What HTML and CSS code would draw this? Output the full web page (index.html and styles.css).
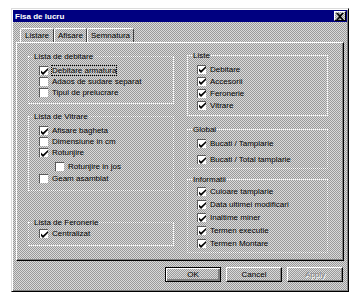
FILE: index.html
```html
<!DOCTYPE html>
<html lang="ro">
<head>
  <meta charset="UTF-8">
  <meta name="viewport" content="width=device-width, initial-scale=1.0">
  <title>Fisa de lucru</title>
  <link rel="stylesheet" href="styles.css">
</head>
<body>
  <div class="window">
    <div class="titlebar">
      <span class="title">Fisa de lucru</span>
      <span class="close-btn">
        <svg width="8" height="7" viewBox="0 0 8 7"><path d="M0 0h2l2 2 2-2h2L5 3.5 8 7H6L4 5 2 7H0l3-3.5z" fill="#000"/></svg>
      </span>
    </div>

    <div class="tabs">
      <span class="tab active">Listare</span>
      <span class="tab">Afisare</span>
      <span class="tab">Semnatura</span>
    </div>

    <div class="panel">
      <div class="column left">
        <fieldset class="group g-debitare">
          <legend>Lista de debitare</legend>
          <div class="row"><span class="check on"><svg viewBox="0 0 7 7"><path d="M0 2.5l2 2 5-4.5v2l-5 5-2-2z"/></svg></span><span class="focus">Debitare armatura</span></div>
          <div class="row"><span class="check"></span>Adaos de sudare separat</div>
          <div class="row"><span class="check"></span>Tipul de prelucrare</div>
        </fieldset>

        <fieldset class="group g-vitrare">
          <legend>Lista de Vitrare</legend>
          <div class="row"><span class="check on"><svg viewBox="0 0 7 7"><path d="M0 2.5l2 2 5-4.5v2l-5 5-2-2z"/></svg></span>Afisare bagheta</div>
          <div class="row"><span class="check"></span>Dimensiune in cm</div>
          <div class="row"><span class="check on"><svg viewBox="0 0 7 7"><path d="M0 2.5l2 2 5-4.5v2l-5 5-2-2z"/></svg></span>Rotunjire</div>
          <div class="row indent"><span class="check"></span>Rotunjire in jos</div>
          <div class="row after-indent"><span class="check"></span>Geam asamblat</div>
        </fieldset>

        <fieldset class="group g-feronerie">
          <legend>Lista de Feronerie</legend>
          <div class="row"><span class="check on"><svg viewBox="0 0 7 7"><path d="M0 2.5l2 2 5-4.5v2l-5 5-2-2z"/></svg></span>Centralizat</div>
        </fieldset>
      </div>

      <div class="column right">
        <fieldset class="group g-liste">
          <legend>Liste</legend>
          <div class="row"><span class="check on"><svg viewBox="0 0 7 7"><path d="M0 2.5l2 2 5-4.5v2l-5 5-2-2z"/></svg></span>Debitare</div>
          <div class="row"><span class="check on"><svg viewBox="0 0 7 7"><path d="M0 2.5l2 2 5-4.5v2l-5 5-2-2z"/></svg></span>Accesorii</div>
          <div class="row"><span class="check on"><svg viewBox="0 0 7 7"><path d="M0 2.5l2 2 5-4.5v2l-5 5-2-2z"/></svg></span>Feronerie</div>
          <div class="row"><span class="check on"><svg viewBox="0 0 7 7"><path d="M0 2.5l2 2 5-4.5v2l-5 5-2-2z"/></svg></span>Vitrare</div>
        </fieldset>

        <fieldset class="group g-global">
          <legend>Global</legend>
          <div class="row"><span class="check on"><svg viewBox="0 0 7 7"><path d="M0 2.5l2 2 5-4.5v2l-5 5-2-2z"/></svg></span>Bucati / Tamplarie</div>
          <div class="row"><span class="check on"><svg viewBox="0 0 7 7"><path d="M0 2.5l2 2 5-4.5v2l-5 5-2-2z"/></svg></span>Bucati / Total tamplarie</div>
        </fieldset>

        <fieldset class="group g-informatii">
          <legend>Informatii</legend>
          <div class="row"><span class="check on"><svg viewBox="0 0 7 7"><path d="M0 2.5l2 2 5-4.5v2l-5 5-2-2z"/></svg></span>Culoare tamplarie</div>
          <div class="row"><span class="check on"><svg viewBox="0 0 7 7"><path d="M0 2.5l2 2 5-4.5v2l-5 5-2-2z"/></svg></span>Data ultimei modificari</div>
          <div class="row"><span class="check on"><svg viewBox="0 0 7 7"><path d="M0 2.5l2 2 5-4.5v2l-5 5-2-2z"/></svg></span>Inaltime miner</div>
          <div class="row"><span class="check on"><svg viewBox="0 0 7 7"><path d="M0 2.5l2 2 5-4.5v2l-5 5-2-2z"/></svg></span>Termen executie</div>
          <div class="row"><span class="check on"><svg viewBox="0 0 7 7"><path d="M0 2.5l2 2 5-4.5v2l-5 5-2-2z"/></svg></span>Termen Montare</div>
        </fieldset>
      </div>
    </div>

    <div class="buttons">
      <button class="btn default">OK</button>
      <button class="btn">Cancel</button>
      <button class="btn disabled">Apply</button>
    </div>
  </div>
</body>
</html>
```

FILE: styles.css
```css
:root {
  --face: #c0c0c0;
  --light: #ffffff;
  --shadow: #808080;
  --dark: #000000;
  --navy: #000080;
}

* {
  box-sizing: border-box;
}

body {
  margin: 0;
  background-color: #fff;
  font-family: 'Liberation Sans', Arial, sans-serif;
  font-size: 8px;
  color: #000;
}

/* dithered dialog face */
.window,
.btn,
.close-btn {
  background-color: var(--face);
  background-image: repeating-conic-gradient(#9a9a9a 0 25%, #dadada 0 50%);
  background-size: 2px 2px;
}

.window {
  margin: 8px 0 0 11px;
  width: 338px;
  height: 284px;
  border: 1px solid;
  border-color: #dcdcdc #000 #000 #dcdcdc;
  box-shadow: inset 1px 1px 0 var(--light), inset -1px -1px 0 var(--shadow);
  padding: 1px;
  display: flex;
  flex-direction: column;
}

.titlebar {
  height: 12px;
  background-color: var(--navy);
  display: flex;
  align-items: center;
  justify-content: space-between;
  padding: 0 1px 0 2px;
}

.title {
  color: #fff;
  font-weight: bold;
  font-size: 8px;
}

.close-btn {
  width: 12px;
  height: 10px;
  display: flex;
  align-items: center;
  justify-content: center;
  border: 1px solid;
  border-color: #fff #000 #000 #fff;
}

.tabs {
  display: flex;
  margin: 6px 0 0 7px;
  height: 14px;
}

.tab {
  height: 14px;
  padding: 0 3px;
  line-height: 13px;
  border: 1px solid;
  border-color: #fff #404040 transparent #fff;
  border-bottom: 0;
  border-radius: 2px 2px 0 0;
}

.tab.active {
  padding: 0 4px 0 4px;
}

.panel {
  margin: 0 3px 0 3px;
  height: 219px;
  border: 1px solid;
  border-color: #fff #000 #000 #fff;
  box-shadow: inset -1px -1px 0 var(--shadow);
  display: grid;
  grid-template-columns: 146px 141px;
  column-gap: 13px;
  align-items: start;
  padding-left: 11px;
}

.column {
  display: flex;
  flex-direction: column;
}

.column.left {
  padding-top: 9px;
}

.column.right {
  padding-top: 8px;
}

.group {
  margin: 0;
  min-width: 0;
  border: 1px dotted #fff;
  padding: 0 0 0 10px;
}

.group legend {
  font-size: 8px;
  line-height: 9px;
  padding: 0 1px;
  margin-left: -6px;
}

.row {
  display: flex;
  align-items: center;
  height: 11px;
  white-space: nowrap;
}

.check {
  width: 9px;
  height: 9px;
  margin-right: 4px;
  background: #fff;
  border-top: 1px solid #5a5a5a;
  border-left: 1px solid #5a5a5a;
  display: flex;
  align-items: center;
  justify-content: center;
  flex-shrink: 0;
}

.check svg {
  width: 7px;
  height: 7px;
  fill: #000;
}

.focus {
  outline: 1px dotted #000;
  outline-offset: 0;
}

.indent {
  padding-left: 16px;
  margin-top: 3px;
}

.after-indent {
  margin-top: 1px;
}

/* left column groups */
.g-debitare {
  padding-top: 4px;
  padding-bottom: 5px;
}

.g-vitrare {
  margin-top: 8px;
  padding-top: 4px;
  padding-bottom: 6px;
}

.g-feronerie {
  margin-top: 27px;
  padding-top: 1px;
  padding-bottom: 6px;
}

/* right column groups */
.right .group {
  padding-left: 9px;
}

.right .group legend {
  margin-left: -5px;
}

.g-liste {
  padding-top: 3px;
  padding-bottom: 4px;
}

.g-liste .row {
  height: 12px;
}

.g-global {
  margin-top: 9px;
  padding-top: 4px;
  padding-bottom: 3px;
}

.g-global .row + .row {
  margin-top: 5px;
}

.g-informatii {
  margin-top: 6px;
  padding-top: 1px;
  padding-bottom: 2px;
}

.g-informatii .row {
  height: 13px;
}

.buttons {
  display: flex;
  justify-content: flex-end;
  gap: 5px;
  margin: 6px 4px 0 0;
}

.btn {
  width: 56px;
  height: 15px;
  padding: 0;
  font-family: inherit;
  font-size: 8px;
  color: #000;
  border: 1px solid;
  border-color: #fff #000 #000 #fff;
  box-shadow: inset -1px -1px 0 var(--shadow);
}

.btn.default {
  border: 1px solid #000;
  box-shadow: inset 1px 1px 0 #fff, inset -2px -2px 0 var(--shadow);
}

.btn.disabled {
  color: var(--shadow);
  text-shadow: 1px 1px 0 #fff;
}
```
